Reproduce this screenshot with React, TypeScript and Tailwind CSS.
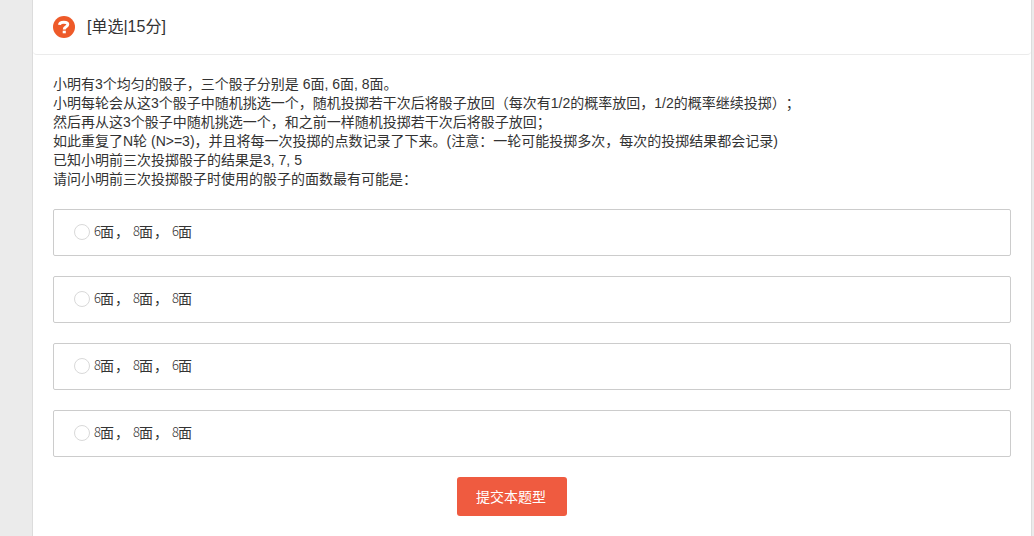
const question = [
  '小明有3个均匀的骰子，三个骰子分别是 6面, 6面, 8面。',
  '小明每轮会从这3个骰子中随机挑选一个，随机投掷若干次后将骰子放回（每次有1/2的概率放回，1/2的概率继续投掷）；',
  '然后再从这3个骰子中随机挑选一个，和之前一样随机投掷若干次后将骰子放回；',
  '如此重复了N轮 (N>=3)，并且将每一次投掷的点数记录了下来。(注意：一轮可能投掷多次，每次的投掷结果都会记录)',
  '已知小明前三次投掷骰子的结果是3, 7, 5',
  '请问小明前三次投掷骰子时使用的骰子的面数最有可能是：',
]

const options = [
  [6, 8, 6],
  [6, 8, 8],
  [8, 8, 6],
  [8, 8, 8],
]

function QuestionIcon() {
  return (
    <svg className="size-[22px] shrink-0" viewBox="0 0 22 22" fill="none">
      <circle cx="11" cy="11" r="11" fill="#ee5a29" />
      <path d="M6.5 8.8C6.6 6.9 8.4 6.2 10.9 6.2C13.4 6.2 14.8 7 14.8 8.5C14.8 10.8 11.2 10.6 11.2 13.4" stroke="#fff" strokeWidth="2.9" />
      <path d="M9.7 14.7h3.1v2.6H9.7z" fill="#fff" />
    </svg>
  )
}

function Option({ faces }: { faces: number[] }) {
  return (
    <label className="flex h-[47px] items-center rounded-[2px] border border-[#ccc] pb-0.5 pl-5">
      <input type="radio" name="answer" className="size-4 shrink-0 appearance-none rounded-full border border-[#d9d9d9]" />
      <span className="ml-[3px] flex whitespace-pre pb-0.5 text-sm leading-5">
        {faces.map((face, i) => (
          <span key={i} className="flex">
            <span className="w-[7px] pl-px text-[13px] font-light -tracking-[0.5px]">{face}</span>
            <span className="w-[13px]">面</span>
            {i < faces.length - 1 && <span className="w-[19px] pl-0.5">，</span>}
          </span>
        ))}
      </span>
    </label>
  )
}

function App() {
  return (
    <div className="h-screen overflow-hidden bg-[#ebebeb] pl-8 pr-0.5 font-['Liberation_Sans','Noto_Sans_CJK_SC',sans-serif] text-[#333]">
      <div className="h-full border-x border-[#dcdcdc] bg-white">
        <header className="flex h-[55px] items-center rounded-b border-b border-[#ebebeb] pl-5">
          <QuestionIcon />
          <h1 className="ml-3 text-base">[单选|15分]</h1>
        </header>

        <main className="px-5 pt-5">
          <div className="whitespace-nowrap text-sm leading-[19px] [text-spacing-trim:space-all]">
            {question.map((line) => (
              <p key={line}>{line}</p>
            ))}
          </div>

          <div className="mt-5 flex flex-col gap-5 font-['Noto_Sans_CJK_SC',sans-serif]">
            {options.map((faces) => (
              <Option key={faces.join()} faces={faces} />
            ))}
          </div>

          <div className="mt-5 flex justify-center pr-10">
            <button className="h-[39px] w-[110px] rounded-[3px] bg-[#ef5b40] pr-0.5 text-sm text-white">提交本题型</button>
          </div>
        </main>
      </div>
    </div>
  )
}

export default App
